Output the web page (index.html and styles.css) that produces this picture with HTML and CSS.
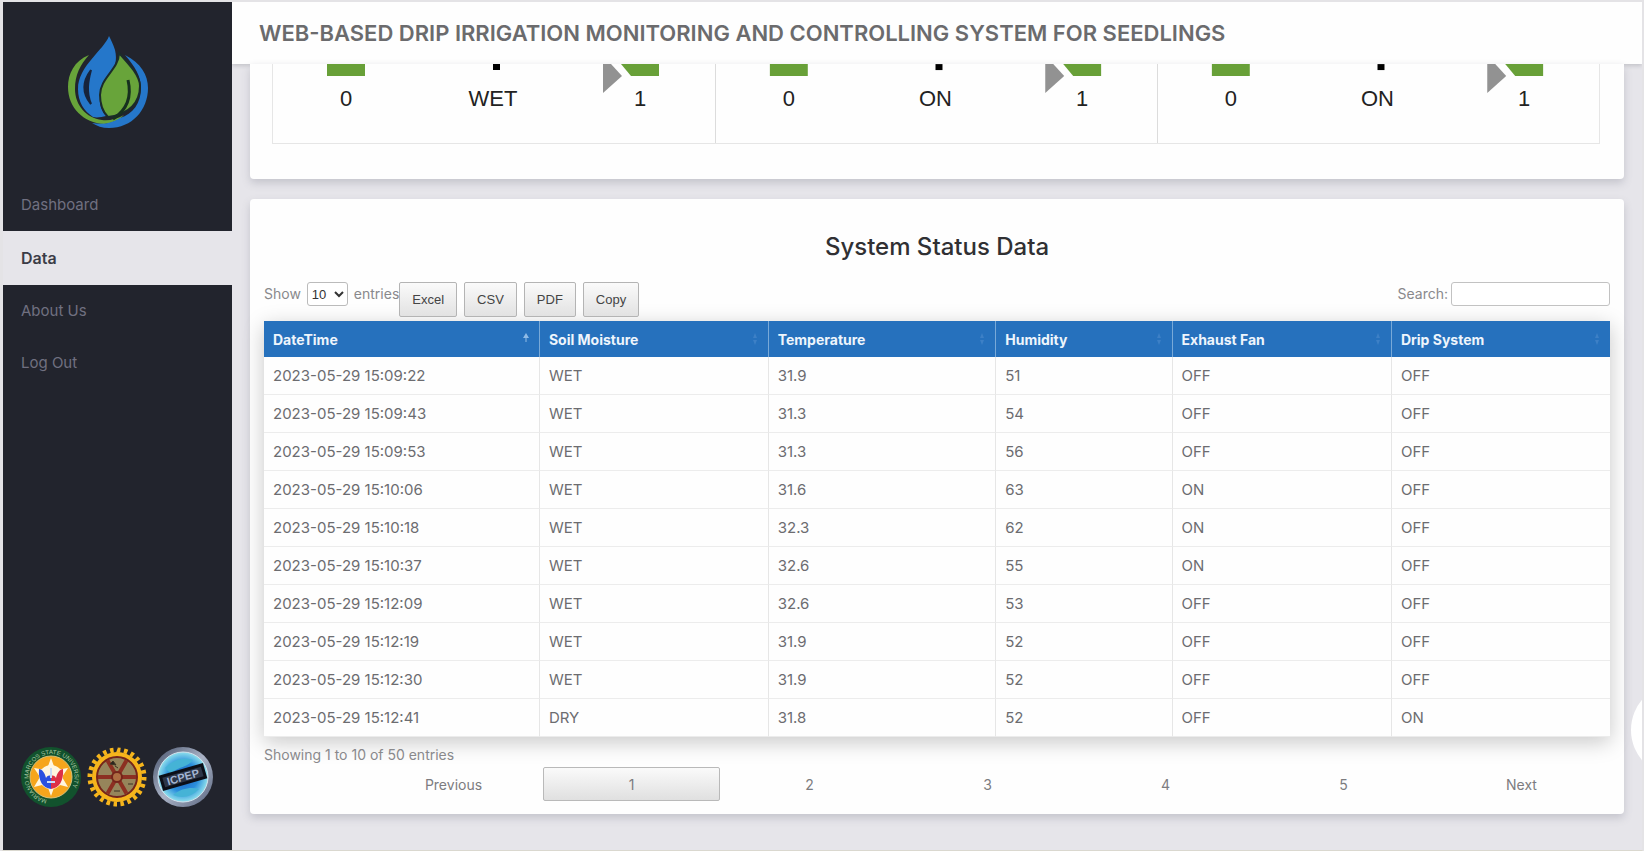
FILE: index.html
```html
<!DOCTYPE html>
<html lang="en">
<head>
<meta charset="utf-8">
<title>Drip Irrigation Monitoring</title>
<link rel="stylesheet" href="styles.css">
</head>
<body>
<div class="app">
  <aside class="sidebar">
    <svg class="logo" viewBox="0 0 80 96" aria-hidden="true">
      <path d="M21 20C6 26 0 39 0 52c0 21 16 36 36 37 9-1 15-4 20-9-7 4-15 6-22 5C18 83 7 70 7 54c0-14 5-24 14-34z" fill="#68a43a"/>
      <path d="M57 20c16 8 23 20 23 33 0 22-16 40-39 40-7 0-12-2-17-5 12 2 20 0 28-5 13-4 21-15 21-30 0-12-6-21-16-33z" fill="#2577ca"/>
      <path d="M41 1C36 15 10 31 10 54c0 13 6 22 15 28 4 1 9 0 13-1-5-5-8-14-5-24C36 43 52 36 47 15 45 9 43 5 41 1z" fill="#2577ca"/>
      <path d="M23 35c-9 12-9 23 0 34-5-12-3-23 0-34z" fill="#17243c" stroke="#17243c" stroke-width="2"/>
      <path d="M51 18c0 16-19 25-19 42 0 8 3 17 8 22 22-3 32-15 32-31 0-10-10-21-21-33z" fill="#68a43a" stroke="#1b2b2b" stroke-width="2"/>
      <path d="M60 45c4 17-1 30-15 39" fill="none" stroke="#17301f" stroke-width="3"/>
    </svg>
    <nav class="menu">
      <a class="menu-link" href="#dashboard">Dashboard</a>
      <a class="menu-link menu-link-active" href="#data" aria-current="page">Data</a>
      <a class="menu-link" href="#about">About Us</a>
      <a class="menu-link" href="#logout">Log Out</a>
    </nav>
    <div class="seals">
      <svg class="seal" viewBox="0 0 62 62" role="img" aria-label="University seal">
        <defs><path id="ring" d="M31 54a23 23 0 1 1 1 0"/></defs>
        <circle cx="31" cy="31" r="30" fill="#12522d"/>
        <text class="seal-text"><textPath href="#ring" startOffset="4">MARIANO MARCOS STATE UNIVERSITY</textPath></text>
        <circle cx="31" cy="31" r="21" fill="#f6a51c" stroke="#d9c27a" stroke-width="1"/>
        <g fill="#fff6e0"><circle cx="31" cy="31" r="12"/><path d="M31 12l4 11h-8zM31 50l4-11h-8zM14 22l12 2-6 7zM48 22l-12 2 6 7zM14 41l12-3-6-7zM48 41l-12-3 6-7z"/></g>
        <path d="M31 43c-8-1-13-8-12-20 3 0 6 4 7 9 2-3 4-3 5-1z" fill="#2b50e0"/>
        <path d="M31 43c8-1 13-8 12-20-3 0-6 4-7 9-2-3-4-3-5-1z" fill="#dd2f46"/>
        <path d="M31 22v10M27 36h8" stroke="#c9dcf7" stroke-width="2"/>
      </svg>
      <svg class="seal" viewBox="0 0 62 62" role="img" aria-label="Engineering gear seal">
        <circle cx="31" cy="31" r="27" fill="none" stroke="#f6b51c" stroke-width="5" pathLength="48" stroke-dasharray="1 1"/>
        <circle cx="31" cy="31" r="25" fill="#f6b51c"/>
        <circle cx="31" cy="31" r="20" fill="#96855b" stroke="#74251b" stroke-width="2"/>
        <path d="M12 31h38M21.500 14.500l19 33M40.500 14.500l-19 33" stroke="#8c3022" stroke-width="4"/>
        <circle cx="31" cy="31" r="5" fill="#ad6c42" stroke="#74251b" stroke-width="2"/>
        <path d="M24 18l3-3 3 4zM42 38h5M28 45h6M29 20l3 2" fill="#29251f" stroke="#3c3324"/>
      </svg>
      <svg class="seal" viewBox="0 0 62 62" role="img" aria-label="ICPEP seal">
        <defs>
          <radialGradient id="globe"><stop offset="0" stop-color="#1a5fc2"/><stop offset=".6" stop-color="#2b8fdc"/><stop offset="1" stop-color="#8fe0ec"/></radialGradient>
          <linearGradient id="steel" x2="1" y2="1"><stop offset="0" stop-color="#46516a"/><stop offset=".5" stop-color="#aab3c6"/><stop offset="1" stop-color="#59647e"/></linearGradient>
        </defs>
        <circle cx="31" cy="31" r="30" fill="url(#steel)"/>
        <circle cx="31" cy="31" r="25" fill="url(#globe)" stroke="#d3e3ee" stroke-width="1"/>
        <path d="M13 22c8-9 20-11 28-8-6 8-17 7-22 14zM21 49c9 4 19 2 26-6-8-2-17-1-26 6z" fill="#45b3d6"/>
        <g transform="rotate(-16 31 31)">
          <path d="M8 23h46v16H8z" fill="#0c0f18"/>
          <path d="M11 26h40v10H11z" fill="#2c3648"/>
          <text class="seal-name" x="31" y="35">ICPEP</text>
        </g>
      </svg>
    </div>
  </aside>

  <div class="page">
    <header class="topbar"><h1 class="topbar-title">WEB-BASED DRIP IRRIGATION MONITORING AND CONTROLLING SYSTEM FOR SEEDLINGS</h1></header>
    <main class="content">
      <section class="card gauges-card">
        <div class="gauges">
          <div class="gauge">
            <svg class="gauge-art" viewBox="0 0 442 79">
              <path d="M54 0h38v12H54z" fill="#68a038"/><path d="M220 0h7v6h-7z"/>
              <path d="M330 0h8l11 12-19 17z" fill="#929292"/><path d="M348 0h38v12h-28z" fill="#68a038"/>
              <text class="gauge-text" x="73" y="42">0</text><text class="gauge-text" x="220" y="42">WET</text><text class="gauge-text" x="367" y="42">1</text>
            </svg>
          </div>
          <div class="gauge">
            <svg class="gauge-art" viewBox="0 0 442 79">
              <path d="M54 0h38v12H54z" fill="#68a038"/><path d="M220 0h7v6h-7z"/>
              <path d="M330 0h8l11 12-19 17z" fill="#929292"/><path d="M348 0h38v12h-28z" fill="#68a038"/>
              <text class="gauge-text" x="73" y="42">0</text><text class="gauge-text" x="220" y="42">ON</text><text class="gauge-text" x="367" y="42">1</text>
            </svg>
          </div>
          <div class="gauge">
            <svg class="gauge-art" viewBox="0 0 442 79">
              <path d="M54 0h38v12H54z" fill="#68a038"/><path d="M220 0h7v6h-7z"/>
              <path d="M330 0h8l11 12-19 17z" fill="#929292"/><path d="M348 0h38v12h-28z" fill="#68a038"/>
              <text class="gauge-text" x="73" y="42">0</text><text class="gauge-text" x="220" y="42">ON</text><text class="gauge-text" x="367" y="42">1</text>
            </svg>
          </div>
        </div>
      </section>

      <section class="card data-card">
        <h2 class="data-title">System Status Data</h2>
        <div class="toolbar">
          <div class="length">
            <label for="length">Show</label>
            <select id="length" class="length-select"><option>10</option><option>25</option><option>50</option></select>
            <span>entries</span>
          </div>
          <div class="exports">
            <button class="export" type="button">Excel</button>
            <button class="export" type="button">CSV</button>
            <button class="export" type="button">PDF</button>
            <button class="export" type="button">Copy</button>
          </div>
          <div class="search">
            <label for="search">Search:</label>
            <input id="search" class="search-input" type="search">
          </div>
        </div>
        <table class="status">
          <colgroup><col class="c-date"><col class="c-soil"><col class="c-temp"><col class="c-hum"><col class="c-fan"><col class="c-drip"></colgroup>
          <thead>
            <tr>
              <th aria-sort="ascending"><span class="head">DateTime<svg class="sort sort-on" viewBox="0 0 8 12"><path d="M4 0l3 5H1z"/><path d="M3 5h2v4H3z" opacity=".5"/></svg></span></th>
              <th><span class="head">Soil Moisture<svg class="sort" viewBox="0 0 8 12"><path d="M4 0l2 5H2zM4 12l2-5H2z"/></svg></span></th>
              <th><span class="head">Temperature<svg class="sort" viewBox="0 0 8 12"><path d="M4 0l2 5H2zM4 12l2-5H2z"/></svg></span></th>
              <th><span class="head">Humidity<svg class="sort" viewBox="0 0 8 12"><path d="M4 0l2 5H2zM4 12l2-5H2z"/></svg></span></th>
              <th><span class="head">Exhaust Fan<svg class="sort" viewBox="0 0 8 12"><path d="M4 0l2 5H2zM4 12l2-5H2z"/></svg></span></th>
              <th><span class="head">Drip System<svg class="sort" viewBox="0 0 8 12"><path d="M4 0l2 5H2zM4 12l2-5H2z"/></svg></span></th>
            </tr>
          </thead>
          <tbody>
            <tr><td>2023-05-29 15:09:22</td><td>WET</td><td>31.9</td><td>51</td><td>OFF</td><td>OFF</td></tr>
            <tr><td>2023-05-29 15:09:43</td><td>WET</td><td>31.3</td><td>54</td><td>OFF</td><td>OFF</td></tr>
            <tr><td>2023-05-29 15:09:53</td><td>WET</td><td>31.3</td><td>56</td><td>OFF</td><td>OFF</td></tr>
            <tr><td>2023-05-29 15:10:06</td><td>WET</td><td>31.6</td><td>63</td><td>ON</td><td>OFF</td></tr>
            <tr><td>2023-05-29 15:10:18</td><td>WET</td><td>32.3</td><td>62</td><td>ON</td><td>OFF</td></tr>
            <tr><td>2023-05-29 15:10:37</td><td>WET</td><td>32.6</td><td>55</td><td>ON</td><td>OFF</td></tr>
            <tr><td>2023-05-29 15:12:09</td><td>WET</td><td>32.6</td><td>53</td><td>OFF</td><td>OFF</td></tr>
            <tr><td>2023-05-29 15:12:19</td><td>WET</td><td>31.9</td><td>52</td><td>OFF</td><td>OFF</td></tr>
            <tr><td>2023-05-29 15:12:30</td><td>WET</td><td>31.9</td><td>52</td><td>OFF</td><td>OFF</td></tr>
            <tr><td>2023-05-29 15:12:41</td><td>DRY</td><td>31.8</td><td>52</td><td>OFF</td><td>ON</td></tr>
          </tbody>
        </table>
        <p class="info">Showing 1 to 10 of 50 entries</p>
        <nav class="pager" aria-label="Table pages">
          <button class="page-btn" type="button">Previous</button>
          <button class="page-btn page-btn-current" type="button" aria-current="page">1</button>
          <button class="page-btn" type="button">2</button>
          <button class="page-btn" type="button">3</button>
          <button class="page-btn" type="button">4</button>
          <button class="page-btn" type="button">5</button>
          <button class="page-btn" type="button">Next</button>
        </nav>
      </section>
    </main>
    <div class="bubble"></div>
  </div>
</div>
</body>
</html>
```
FILE: styles.css
```css
* { box-sizing: border-box; }

body {
  margin: 0;
  background: #dcdad8;
  color: #6c6c70;
  font-family: Inter, "Open Sans", sans-serif;
  font-size: 14px;
}

.app {
  display: flex;
  min-height: 100vh;
  border: solid #e4e3e6;
  border-width: 2px 2px 2px 3px;
  border-bottom-color: #dad8cf;
}

.sidebar {
  display: flex;
  flex-direction: column;
  flex: 0 0 229px;
  background: #22242d;
}

.logo {
  width: 80px;
  height: 96px;
  margin: 33px 0 48px 65px;
}

.menu {
  display: flex;
  flex-direction: column;
}

.menu-link {
  padding: 0 18px;
  color: #707080;
  font-size: 15px;
  line-height: 52px;
  text-decoration: none;
}

.menu-link-active {
  background: #e6e5ea;
  color: #3b3c46;
  font-size: 16px;
  font-weight: 600;
  line-height: 54px;
}

.seals {
  display: flex;
  gap: 4px;
  margin: auto 0 42px 17px;
}

.seal {
  width: 62px;
  height: 62px;
}

.seal-text {
  fill: #a9c6a0;
  font: 6px "Liberation Sans", sans-serif;
}

.seal-name {
  fill: #a3b5d3;
  font: bold 11px "Liberation Sans", sans-serif;
  text-anchor: middle;
}

.page {
  position: relative;
  flex: 1;
  min-width: 0;
  overflow: hidden;
  background: #e6e5ea;
}

.topbar {
  padding: 0 27px;
  background: #fefefe;
  box-shadow: 0 2px 4px #c4c4ca;
}

.topbar-title {
  margin: 0;
  color: #6b6b6d;
  font-size: 22px;
  font-weight: 600;
  line-height: 62px;
}

.content {
  position: relative;
  display: flex;
  flex-direction: column;
  gap: 20px;
  padding: 0 18px 36px;
}

.card {
  background: #fefefe;
  border-radius: 4px;
  box-shadow: 0 4px 8px #c4c4cc;
}

.gauges-card {
  padding: 0 24px 35px 22px;
  border-radius: 0 0 4px 4px;
}

.gauges {
  display: grid;
  grid-template-columns: repeat(3, 1fr);
  border: 1px solid #e6e6e6;
  border-top: 0;
}

.gauge + .gauge {
  border-left: 1px solid #dcdcdc;
}

.gauge-art {
  display: block;
  width: 100%;
  height: 79px;
}

.gauge-text {
  fill: #222;
  font: 22px "Liberation Sans", Arial, sans-serif;
  text-anchor: middle;
}

.data-card {
  padding: 32px 14px 13px;
}

.data-title {
  margin: 0 0 19px;
  color: #303033;
  font-size: 24px;
  font-weight: 500;
  line-height: 32px;
  text-align: center;
}

.toolbar {
  display: flex;
  align-items: flex-start;
  height: 39px;
  color: #89898c;
  line-height: 24px;
}

.length,
.search {
  display: flex;
  gap: 6px;
}

.length-select {
  width: 41px;
  height: 24px;
  padding: 0;
  border: 1px solid #bbb;
  border-radius: 3px;
  background: #fff;
  color: #333;
  font: 13px "Liberation Sans", Arial, sans-serif;
}

.exports {
  display: flex;
  gap: 7px;
}

.export {
  height: 35px;
  padding: 0 12px;
  border: 1px solid #b4b4b4;
  border-radius: 2px;
  background: linear-gradient(#fafafa, #e2e2e2);
  color: #444;
  font: 13px "Liberation Sans", Arial, sans-serif;
}

.search {
  gap: 3px;
  margin-left: auto;
}

.search-input {
  width: 159px;
  height: 24px;
  border: 1px solid #c2c2c2;
  border-radius: 3px;
  background: #fff;
}

.status {
  width: 100%;
  table-layout: fixed;
  border-collapse: separate;
  border-spacing: 0;
  box-shadow: 0 5px 20px #c8c8c8;
}

.c-date { width: 20.5%; }
.c-soil { width: 17%; }
.c-temp { width: 16.9%; }
.c-hum { width: 13.1%; }
.c-fan { width: 16.3%; }
.c-drip { width: 16.2%; }

.status th,
.status td {
  height: 38px;
  padding: 0 9px;
  border-bottom: 1px solid #ececec;
  border-right: 1px solid #e6e6e6;
  background: #fefefe;
  text-align: left;
}

.status td {
  font-size: 15px;
}

.status th {
  height: 36px;
  border-bottom: 0;
  border-color: #78a9d8;
  background: #2671bd;
  color: #eef5fc;
  font-size: 14px;
  font-weight: 700;
}

.status th:last-child,
.status td:last-child {
  border-right: 0;
}

.head {
  display: flex;
  align-items: center;
  justify-content: space-between;
}

.sort {
  width: 8px;
  height: 12px;
  fill: #3d80c6;
}

.sort-on {
  fill: #8fbbe6;
}

.info {
  margin: 0;
  padding-top: 6px;
  color: #89898c;
  line-height: 24px;
}

.pager {
  display: grid;
  grid-template-columns: repeat(7, 1fr);
  gap: 1px;
  padding-left: 101px;
}

.page-btn {
  height: 34px;
  border: 1px solid transparent;
  border-radius: 2px;
  background: none;
  color: #7c7c80;
  font: inherit;
}

.page-btn-current {
  border-color: #b9b9b9;
  background: linear-gradient(#fafafa, #e0e0e0);
}

.bubble {
  position: absolute;
  top: 681px;
  right: -83px;
  width: 94px;
  height: 94px;
  border-radius: 50%;
  background: #fff;
}
```
